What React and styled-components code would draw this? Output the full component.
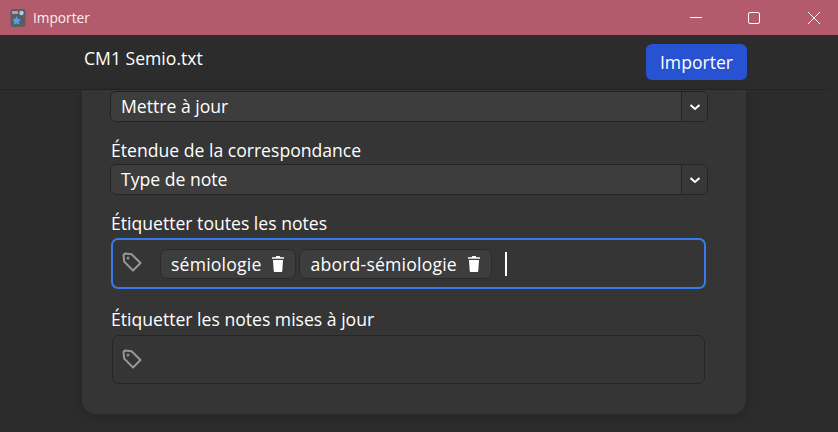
import React from 'react'
import styled, { createGlobalStyle } from 'styled-components'

const GlobalStyle = createGlobalStyle`
    html, body {
        margin: 0;
        height: 100%;
        background: #2c2c2c;
        overflow: hidden;
    }
    * {
        box-sizing: border-box;
    }
`
const Page = styled.div`
    width: 838px;
    height: 432px;
    display: flex;
    flex-direction: column;
    overflow: hidden;
    font-family: "Open Sans", "Noto Sans", sans-serif;
    font-size: 17.6px;
    color: #fff;
`
const TitleBar = styled.div`
    height: 35px;
    flex: none;
    display: flex;
    align-items: center;
    padding-left: 10px;
    background: #b35a6c;
    font-size: 13.7px;
`
const TitleText = styled.span`
    margin-left: 7px;
    flex: 1;
    color: #fbeff1;
`
const WinButton = styled.div`
    width: ${p => (p.$close ? 55 : 58)}px;
    height: 35px;
    padding-left: ${p => (p.$close ? 6 : 0)}px;
    display: flex;
    align-items: center;
    justify-content: center;
`
const Header = styled.div`
    height: 55px;
    flex: none;
    width: 830px;
    display: flex;
    justify-content: space-between;
    padding: 9px 83px 0 84px;
    border-bottom: 1px solid #252525;
    background: #2c2c2c;
`
const FileName = styled.div`
    line-height: 28px;
`
const ImportButton = styled.button`
    width: 101px;
    height: 36px;
    padding: 0;
    border: none;
    border-radius: 6px;
    background: #2752d1;
    color: #fff;
    font: inherit;
`
const Main = styled.div`
    flex: 1;
    min-height: 0;
    padding: 0 92px 18px 82px;
`
const Card = styled.div`
    height: 100%;
    padding: 1px 38px 0 28px;
    border-radius: 0 0 14px 14px;
    background: #353535;
    box-shadow: 0 2px 14px rgba(0, 0, 0, 0.18);
`
const Label = styled.div`
    line-height: 24px;
    margin: ${p => p.$top || 0}px 0 ${p => p.$bottom || 0}px 1px;
`
const Select = styled.div`
    height: 31px;
    display: flex;
    border: 1px solid #242424;
    border-radius: 6px;
    background: #3d3d3d;
    overflow: hidden;
    margin-bottom: 16px;
`
const SelectValue = styled.div`
    flex: 1;
    padding-left: 10px;
    line-height: 29px;
`
const SelectArrow = styled.div`
    width: 26px;
    display: flex;
    align-items: center;
    justify-content: center;
    border-left: 1px solid #242424;
    background: #383838;
`
const TagEditor = styled.div`
    display: flex;
    align-items: center;
    height: ${p => p.$height}px;
    margin: ${p => p.$top}px ${p => (p.$focused ? 2 : 3)}px 0 ${p => (p.$focused ? 1 : 2)}px;
    padding-left: 9px;
    border-radius: 7px;
    border: ${p => (p.$focused ? '2px solid #377aec' : '1px solid #252525')};
`
const TagIcon = styled.svg`
    width: 20px;
    height: 20px;
    flex: none;
    margin: 0 18px ${p => (p.$raised ? 3 : 1)}px 0;
    fill: none;
    stroke: #989898;
    stroke-width: 2;
    stroke-linejoin: round;
`
const Tag = styled.div`
    height: 30px;
    display: flex;
    align-items: center;
    gap: 11px;
    margin-right: 3px;
    padding: 0 11px 0 10px;
    border: 1px solid #2a2a2a;
    border-radius: 7px;
    background: #3d3d3d;
    letter-spacing: 0.2px;
`
const Caret = styled.div`
    width: 2px;
    height: 24px;
    margin-left: 10px;
    background: #fff;
`

const TagGlyph = ({ raised }) => (
    <TagIcon viewBox="0 0 20 20" $raised={raised}>
        <path d="M1.5 3 3 1.5 9.6 2.2 18.5 11 11 18.5 2.2 9.6Z" />
        <circle cx="6" cy="6" r="0.5" fill="#989898" />
    </TagIcon>
)

const Chevron = () => (
    <svg width="12" height="12" viewBox="0 0 12 12" fill="none" stroke="#fff" strokeWidth="2">
        <path d="M1.5 4 6 8 10.5 4" />
    </svg>
)

const Trash = () => (
    <svg width="12" height="16" viewBox="0 0 12 16" fill="#fff">
        <path d="M4.2 0h3.6l.5 1.2H12v1.6H0V1.2h3.7z" />
        <path d="M1 4h10l-.7 10.7c0 .7-.6 1.3-1.3 1.3H3c-.7 0-1.3-.6-1.3-1.3z" />
    </svg>
)

const App = () => {
    return (
        <Page>
            <GlobalStyle />
            <TitleBar>
                <svg width="16" height="20" viewBox="0 0 16 20">
                    <rect x="0.5" y="1" width="15" height="18" rx="3" fill="#5c5c60" />
                    <rect x="2" y="3" width="6" height="3" fill="#a5a5a5" />
                    <circle cx="11.5" cy="5" r="2.2" fill="#a8d0ee" />
                    <path d="M6.5 8l1.5 3 3 .4-2.2 2.2.6 3.2-2.9-1.6-2.9 1.6.6-3.2-2.2-2.2 3-.4z" fill="#4aa3e8" />
                </svg>
                <TitleText>Importer</TitleText>
                <WinButton>
                    <svg width="12" height="12" viewBox="0 0 12 12" stroke="#fff" strokeWidth="1">
                        <path d="M0 5.5H12" />
                    </svg>
                </WinButton>
                <WinButton>
                    <svg width="12" height="12" viewBox="0 0 12 12" fill="none" stroke="#fff" strokeWidth="1">
                        <rect x="0.5" y="0.5" width="11" height="11" rx="1.5" />
                    </svg>
                </WinButton>
                <WinButton $close>
                    <svg width="12" height="12" viewBox="0 0 12 12" stroke="#fff" strokeWidth="1">
                        <path d="M0 0 12 12M12 0 0 12" />
                    </svg>
                </WinButton>
            </TitleBar>
            <Header>
                <FileName>CM1 Semio.txt</FileName>
                <ImportButton>Importer</ImportButton>
            </Header>
            <Main>
                <Card>
                    <Select>
                        <SelectValue>Mettre à jour</SelectValue>
                        <SelectArrow><Chevron /></SelectArrow>
                    </Select>
                    <Label $bottom={2}>Étendue de la correspondance</Label>
                    <Select>
                        <SelectValue>Type de note</SelectValue>
                        <SelectArrow><Chevron /></SelectArrow>
                    </Select>
                    <Label>Étiquetter toutes les notes</Label>
                    <TagEditor $focused $height={51} $top={3}>
                        <TagGlyph raised />
                        <Tag>sémiologie <Trash /></Tag>
                        <Tag>abord-sémiologie <Trash /></Tag>
                        <Caret />
                    </TagEditor>
                    <Label $top={18}>Étiquetter les notes mises à jour</Label>
                    <TagEditor $height={49} $top={4}>
                        <TagGlyph />
                    </TagEditor>
                </Card>
            </Main>
        </Page>
    )
}

export default App
